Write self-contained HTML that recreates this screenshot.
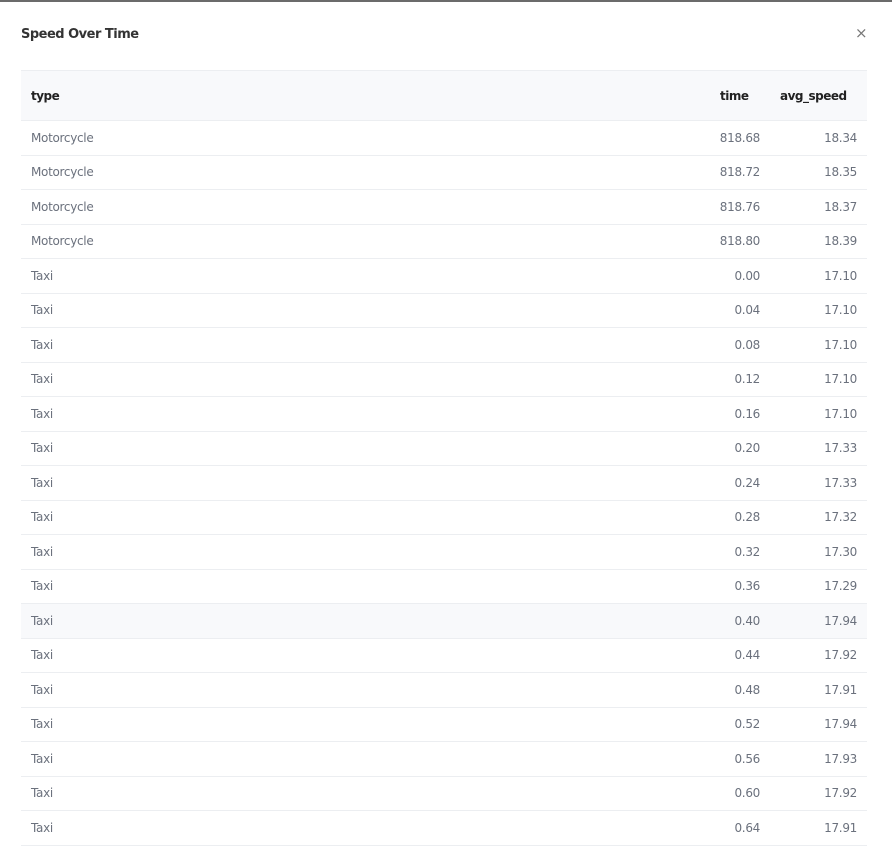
<!DOCTYPE html>
<html><head><style>
html,body{margin:0;padding:0;background:#fff;width:892px;height:845px;overflow:hidden;font-family:"DejaVu Sans","Liberation Sans",sans-serif;}
.top{position:absolute;left:0;top:0;width:892px;height:2px;background:#6b6b6b;}
h1{position:absolute;left:21px;top:27px;margin:0;font-size:13px;font-weight:bold;color:#333;letter-spacing:-0.5px;}
.x{position:absolute;left:855px;top:24px;font-size:15px;color:#777;}
table{position:absolute;left:21px;top:70px;width:846px;border-collapse:collapse;table-layout:fixed;font-size:12px;letter-spacing:-0.3px;}
th{height:49px;background:#f8f9fb;text-align:left;color:#222;font-weight:bold;padding:0 10px;border-top:1px solid #eceef1;border-bottom:1px solid #eceef1;letter-spacing:-0.5px;}
td{height:33.5px;padding:0 10px;color:#6b717d;border-bottom:1px solid #eceef1;}
td.r{text-align:right;}
tr.h td{background:#f8f9fb;}
</style></head><body>
<div class="top"></div>
<h1>Speed Over Time</h1>
<div class="x">×</div>
<table>
<colgroup><col style="width:679px"><col style="width:70px"><col style="width:97px"></colgroup>
<tr><th>type</th><th style="padding-left:20px">time</th><th>avg_speed</th></tr>
<tr><td>Motorcycle</td><td class="r">818.68</td><td class="r">18.34</td></tr>
<tr><td>Motorcycle</td><td class="r">818.72</td><td class="r">18.35</td></tr>
<tr><td>Motorcycle</td><td class="r">818.76</td><td class="r">18.37</td></tr>
<tr><td>Motorcycle</td><td class="r">818.80</td><td class="r">18.39</td></tr>
<tr><td>Taxi</td><td class="r">0.00</td><td class="r">17.10</td></tr>
<tr><td>Taxi</td><td class="r">0.04</td><td class="r">17.10</td></tr>
<tr><td>Taxi</td><td class="r">0.08</td><td class="r">17.10</td></tr>
<tr><td>Taxi</td><td class="r">0.12</td><td class="r">17.10</td></tr>
<tr><td>Taxi</td><td class="r">0.16</td><td class="r">17.10</td></tr>
<tr><td>Taxi</td><td class="r">0.20</td><td class="r">17.33</td></tr>
<tr><td>Taxi</td><td class="r">0.24</td><td class="r">17.33</td></tr>
<tr><td>Taxi</td><td class="r">0.28</td><td class="r">17.32</td></tr>
<tr><td>Taxi</td><td class="r">0.32</td><td class="r">17.30</td></tr>
<tr><td>Taxi</td><td class="r">0.36</td><td class="r">17.29</td></tr>
<tr class="h"><td>Taxi</td><td class="r">0.40</td><td class="r">17.94</td></tr>
<tr><td>Taxi</td><td class="r">0.44</td><td class="r">17.92</td></tr>
<tr><td>Taxi</td><td class="r">0.48</td><td class="r">17.91</td></tr>
<tr><td>Taxi</td><td class="r">0.52</td><td class="r">17.94</td></tr>
<tr><td>Taxi</td><td class="r">0.56</td><td class="r">17.93</td></tr>
<tr><td>Taxi</td><td class="r">0.60</td><td class="r">17.92</td></tr>
<tr><td>Taxi</td><td class="r">0.64</td><td class="r">17.91</td></tr>
</table>
</body></html>
